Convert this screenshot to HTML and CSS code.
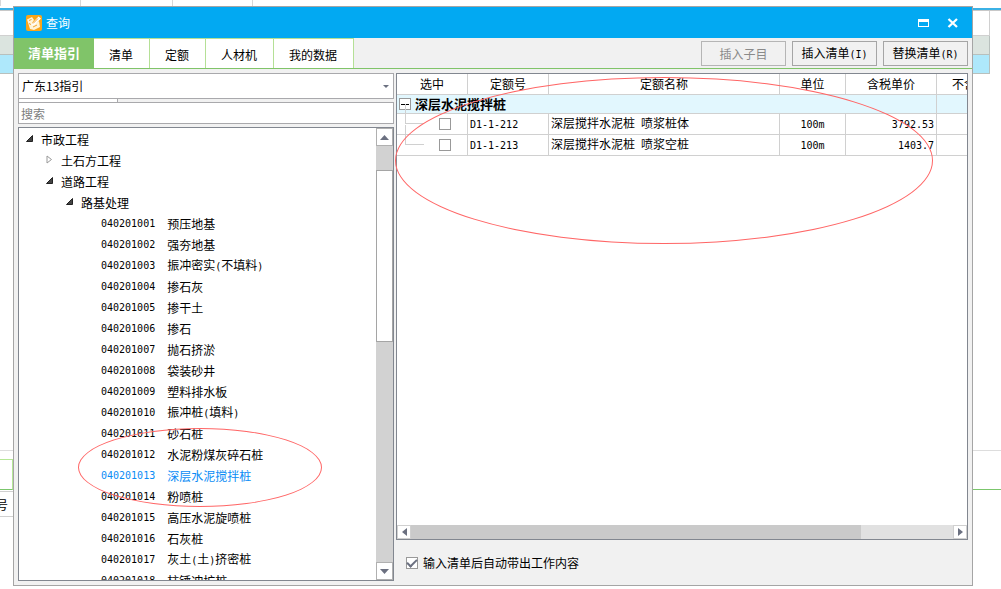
FILE: index.html
```html
<!DOCTYPE html>
<html lang="zh-CN">
<head>
<meta charset="utf-8">
<meta name="viewport" content="width=device-width, initial-scale=1">
<title>查询</title>
<link rel="stylesheet" href="styles.css">
</head>
<body>
<div class="backdrop" aria-hidden="true">
  <div class="ruler"><i></i><i></i><i></i></div>
  <div class="edge edge-left">
    <div class="blue-line"></div>
    <div class="strip white"></div>
    <div class="strip sage"></div>
    <div class="strip sky"></div>
    <div class="lower">
      <div class="green-box"></div>
      <div class="label-cell">号</div>
    </div>
  </div>
  <div class="edge edge-right">
    <div class="blue-line"></div>
    <div class="strip white"></div>
    <div class="strip sage"></div>
    <div class="strip sky"></div>
    <div class="lower"><div class="green-line"></div></div>
  </div>
</div>

<main class="window">
  <header class="titlebar">
    <svg class="app-icon" viewBox="0 0 16 16" width="16" height="16">
      <rect width="16" height="16" rx="2" fill="#f9a51a"/>
      <path d="M1 4.5 6 2l2 3-2 3 2 1 5-3 1 6-6 3-4-1z" fill="#fff4d8"/>
      <path d="M6 8.500 12.500 1.500 15 3.500 8.500 10 5.500 10.500z" fill="#fff"/>
      <path d="M3 5.500 5.500 4.500M3.500 8l1 2M7 12l4-2M7 8.500l5-5" stroke="#f4a332" fill="none"/>
    </svg>
    <h1 class="title">查询</h1>
    <button class="win-button" aria-label="最大化"><svg width="12" height="10" viewBox="0 0 12 10"><path d="M0 1h11v8H0zM1 4v4h9V4z" fill="#fff" fill-rule="evenodd"/></svg></button>
    <button class="win-button" aria-label="关闭"><svg width="12" height="10" viewBox="0 0 12 10"><path d="M1.500 1 10 9M10 1 1.500 9" stroke="#fff" stroke-width="2.300"/></svg></button>
  </header>

  <div class="toolbar">
    <nav class="tabs">
      <button class="tab active">清单指引</button><button class="tab">清单</button><button class="tab">定额</button><button class="tab">人材机</button><button class="tab">我的数据</button>
    </nav>
    <div class="actions">
      <button class="action" disabled>插入子目</button>
      <button class="action">插入清单<span class="mono">(I)</span></button>
      <button class="action">替换清单<span class="mono">(R)</span></button>
    </div>
  </div>

  <div class="content">
    <section class="sidebar">
      <div class="combo">
        <select class="combo-select" aria-label="指引"><option>广东13指引</option></select>
        <svg class="combo-arrow" width="6" height="3" viewBox="0 0 6 3"><path d="M0 0h6L3 3z" fill="#6b7080"/></svg>
      </div>
      <div class="splitter"></div>
      <input class="search" type="text" placeholder="搜索" aria-label="搜索">
      <div class="tree-panel">
        <ul class="tree">
          <li class="level-1"><svg class="twisty" viewBox="0 0 7 7"><path d="M6.500.5v6h-6z" fill="#444" stroke="#222"/></svg>市政工程</li>
          <li class="level-2"><svg class="twisty" viewBox="0 0 7 9"><path d="M1 1v7l4.500-3.500z" fill="#fff" stroke="#999"/></svg>土石方工程</li>
          <li class="level-2"><svg class="twisty" viewBox="0 0 7 7"><path d="M6.500.5v6h-6z" fill="#444" stroke="#222"/></svg>道路工程</li>
          <li class="level-3"><svg class="twisty" viewBox="0 0 7 7"><path d="M6.500.5v6h-6z" fill="#444" stroke="#222"/></svg>路基处理</li>
          <li class="leaf"><span class="mono">040201001</span><span>预压地基</span></li>
          <li class="leaf"><span class="mono">040201002</span><span>强夯地基</span></li>
          <li class="leaf"><span class="mono">040201003</span><span>振冲密实<span class="mono">(</span>不填料<span class="mono">)</span></span></li>
          <li class="leaf"><span class="mono">040201004</span><span>掺石灰</span></li>
          <li class="leaf"><span class="mono">040201005</span><span>掺干土</span></li>
          <li class="leaf"><span class="mono">040201006</span><span>掺石</span></li>
          <li class="leaf"><span class="mono">040201007</span><span>抛石挤淤</span></li>
          <li class="leaf"><span class="mono">040201008</span><span>袋装砂井</span></li>
          <li class="leaf"><span class="mono">040201009</span><span>塑料排水板</span></li>
          <li class="leaf"><span class="mono">040201010</span><span>振冲桩<span class="mono">(</span>填料<span class="mono">)</span></span></li>
          <li class="leaf"><span class="mono">040201011</span><span>砂石桩</span></li>
          <li class="leaf"><span class="mono">040201012</span><span>水泥粉煤灰碎石桩</span></li>
          <li class="leaf selected"><span class="mono">040201013</span><span>深层水泥搅拌桩</span></li>
          <li class="leaf"><span class="mono">040201014</span><span>粉喷桩</span></li>
          <li class="leaf"><span class="mono">040201015</span><span>高压水泥旋喷桩</span></li>
          <li class="leaf"><span class="mono">040201016</span><span>石灰桩</span></li>
          <li class="leaf"><span class="mono">040201017</span><span>灰土<span class="mono">(</span>土<span class="mono">)</span>挤密桩</span></li>
          <li class="leaf"><span class="mono">040201018</span><span>柱锤冲扩桩</span></li>
        </ul>
        <div class="vscroll">
          <button class="scroll-button" aria-label="向上"><svg width="9" height="5" viewBox="0 0 9 5"><path d="M0 5h9L4.500 0z" fill="#6b7080"/></svg></button>
          <div class="vtrack"><div class="vthumb"></div></div>
          <button class="scroll-button" aria-label="向下"><svg width="9" height="5" viewBox="0 0 9 5"><path d="M0 0h9L4.500 5z" fill="#6b7080"/></svg></button>
        </div>
      </div>
    </section>

    <section class="detail">
      <div class="grid-panel">
        <div class="grid-view">
          <table class="grid">
            <colgroup><col class="c-pick"><col class="c-code"><col class="c-name"><col class="c-unit"><col class="c-price"><col class="c-price"></colgroup>
            <thead>
              <tr><th>选中</th><th>定额号</th><th>定额名称</th><th>单位</th><th>含税单价</th><th>不含税单价</th></tr>
            </thead>
            <tbody>
              <tr class="group"><td colspan="5"><div class="group-label"><button class="collapse" aria-label="折叠"></button>深层水泥搅拌桩</div></td><td></td></tr>
              <tr><td class="pick"><input class="check" type="checkbox" aria-label="D1-1-212"></td><td><span class="mono">D1-1-212</span></td><td>深层搅拌水泥桩<span class="mono"> </span>喷浆桩体</td><td class="center"><span class="mono">100m</span></td><td class="number"><span class="mono">3792.53</span></td><td></td></tr>
              <tr><td class="pick"><input class="check" type="checkbox" aria-label="D1-1-213"></td><td><span class="mono">D1-1-213</span></td><td>深层搅拌水泥桩<span class="mono"> </span>喷浆空桩</td><td class="center"><span class="mono">100m</span></td><td class="number"><span class="mono">1403.7</span></td><td></td></tr>
            </tbody>
          </table>
        </div>
        <div class="hscroll">
          <button class="scroll-button" aria-label="向左"><svg width="5" height="8" viewBox="0 0 5 8"><path d="M5 0v8L0 4z" fill="#6b7080"/></svg></button>
          <div class="htrack"><div class="hthumb"></div></div>
          <button class="scroll-button" aria-label="向右"><svg width="5" height="8" viewBox="0 0 5 8"><path d="M0 0v8l5-4z" fill="#6b7080"/></svg></button>
        </div>
      </div>
      <label class="option"><input class="check" type="checkbox" checked>输入清单后自动带出工作内容</label>
    </section>
  </div>

  <div class="mark mark-grid"></div>
  <div class="mark mark-tree"></div>
</main>
</body>
</html>
```
FILE: styles.css
```css
* { box-sizing: border-box; }

body {
  display: flex;
  height: 100vh;
  margin: 0;
  padding: 6px 28px 3px 13px;
  overflow: hidden;
  background: #fff;
  color: #000;
  font: 12px/18px "Noto Sans CJK SC", sans-serif;
}

button, input, select {
  margin: 0;
  padding: 0;
  border: 0;
  border-radius: 0;
  background: none;
  color: inherit;
  font: inherit;
}

.mono {
  font-family: "DejaVu Sans Mono", monospace;
  font-size: 10px;
  white-space: pre;
}

/* Application behind the dialog */
.backdrop {
  position: absolute;
  inset: 0;
  z-index: -1;
  display: flex;
  justify-content: space-between;
  overflow: hidden;
}

.ruler {
  position: absolute;
  inset: 0 0 auto;
  display: flex;
  height: 6px;
  border-left: 1px solid #d8d8d8;
}
.ruler i { width: 80px; border-right: 1px solid #d8d8d8; }
.ruler i:nth-child(2) { width: 92px; }

.edge { display: flex; flex-direction: column; padding-top: 8px; }
.edge-left { width: 13px; }
.edge-right { width: 28px; }
.blue-line { height: 3px; border-bottom: 1px solid #c8c8c8; background: #3bb1e5; }
.strip { height: 19px; border-bottom: 1px solid #b8c0bd; }
.edge-right .strip { width: 17px; border-right: 1px solid #b8c0bd; }
.strip.white { height: 25px; border-color: #d0d0d0; }
.sage { background: #dbe4df; }
.sky { background: #aee8fb; }
.lower {
  display: flex;
  flex-direction: column;
  height: 139px;
  margin-top: auto;
  padding-top: 8px;
  border-top: 1px solid #ddd;
}
.green-box {
  height: 31px;
  margin-bottom: 1px;
  border: solid #b5e796;
  border-width: 1px 1px 1px 0;
  border-bottom-color: #7bc66c;
}
.label-cell {
  display: flex;
  justify-content: flex-end;
  height: 26px;
  padding-right: 5px;
  border: solid #d0d0d0;
  border-width: 1px 0;
  line-height: 26px;
}
.green-line { height: 31px; border-bottom: 1px solid #7bc66c; }

/* Dialog */
.window {
  position: relative;
  display: flex;
  flex: 1;
  flex-direction: column;
  min-width: 0;
  border: 1px solid #a5a5a5;
  background: #f1f1f1;
}

.titlebar {
  display: flex;
  align-items: center;
  height: 31px;
  padding: 0 12px;
  background: #02a9f2;
  color: #fff;
}
.title { flex: 1; margin: 0 0 0 4px; font-size: 12px; font-weight: 400; }
.win-button { display: flex; width: 14px; margin-left: 15px; justify-content: center; }

.toolbar {
  display: flex;
  justify-content: space-between;
  height: 31px;
  border-bottom: 1px solid #80c469;
}
.tabs { display: flex; }
.tab {
  padding: 2px 16px 0 15px;
  border: solid #b5e096;
  border-width: 1px 1px 0 0;
  background: #fff;
}
.tab.active {
  padding: 0 14px;
  border: 0;
  background: #80c469;
  color: #fff;
  font-size: 13px;
  font-weight: 700;
}
.actions { display: flex; gap: 6px; padding: 3px 4px 2px 0; }
.action { width: 85px; border: 1px solid #a5a5a5; }
.action:disabled { border-color: #b5b5b5; color: #8a8a8a; }

.content {
  display: flex;
  flex: 1;
  gap: 2px;
  min-height: 0;
  padding: 4px;
}

.sidebar { display: flex; flex-direction: column; width: 376px; }
.combo { position: relative; }
.combo-select {
  display: block;
  width: 100%;
  height: 26px;
  padding-left: 3px;
  border: 1px solid #a9a9ac;
  appearance: none;
  background: #fff;
}
.combo-arrow { position: absolute; top: 12px; right: 5px; }
.splitter {
  width: 100px;
  height: 3px;
  border: solid #a9a9ac;
  border-width: 0 1px;
  background: #fff;
}
.search { height: 22px; padding-left: 2px; border: 1px solid #a9a9ac; background: #fff; }
.search::placeholder { color: #7d7d7d; opacity: 1; }

.tree-panel {
  display: flex;
  flex: 1;
  min-height: 0;
  margin-top: 3px;
  border: 1px solid #828790;
  background: #fff;
}
.tree {
  flex: 1;
  margin: 0;
  padding: 1px 0 0;
  overflow: hidden;
  list-style: none;
}
.tree li { display: flex; align-items: center; height: 21px; }
.twisty { width: 7px; height: 9px; margin: 0 8px 2px 0; }
.level-1 { padding-left: 7px; }
.level-2 { padding-left: 27px; }
.level-3 { padding-left: 47px; }
.leaf { gap: 12px; padding-left: 82px; }
.selected { color: #0a8cf5; }

.scroll-button {
  display: flex;
  align-items: center;
  justify-content: center;
  border: 1px solid #b0b0b0;
  background: #fff;
}
.vscroll { display: flex; flex-direction: column; width: 17px; background: #d2d2d2; }
.vscroll .scroll-button { height: 18px; }
.vtrack { flex: 1; padding-top: 24px; }
.vthumb { height: 44%; border: 1px solid #a5a5a5; background: #fff; }

.detail { display: flex; flex: 1; flex-direction: column; min-width: 0; }
.grid-panel {
  display: flex;
  flex: 1;
  flex-direction: column;
  border: 1px solid #828790;
  background: #fff;
}
.grid-view { flex: 1; overflow: hidden; }
.grid { width: 631px; border-collapse: separate; border-spacing: 0; table-layout: fixed; }
.c-pick { width: 71px; }
.c-code { width: 81px; }
.c-name { width: 231px; }
.c-unit { width: 66px; }
.c-price { width: 91px; }
.grid th, .grid td {
  height: 19px;
  padding: 0 2px;
  border: solid #d0d0d0;
  border-width: 0 1px 1px 0;
  font-weight: 400;
  line-height: 18px;
  text-align: left;
}
.grid th { height: 21px; line-height: 20px; text-align: center; }
.group td { background: #e2f7fe; }
.group-label { display: flex; align-items: center; gap: 4px; font-size: 13px; font-weight: 700; }
.collapse {
  display: grid;
  place-items: center;
  width: 12px;
  height: 12px;
  border: 1px solid #999;
  background: #fff;
}
.collapse::before { width: 8px; height: 1px; background: #000; content: ""; }
.grid .pick { position: relative; padding-left: 42px; }
.pick::before {
  position: absolute;
  top: -10px;
  left: 8px;
  width: 18px;
  height: 19px;
  border: solid #d0d0d0;
  border-width: 0 0 1px 1px;
  content: "";
}
.grid .center { text-align: center; }
.grid .number { text-align: right; }

.check {
  display: grid;
  place-items: center;
  width: 12px;
  height: 12px;
  border: 1px solid #999;
  appearance: none;
  background: #fff;
}
.check:checked::before {
  width: 8px;
  height: 4px;
  margin-bottom: 3px;
  border: solid #6b7080;
  border-width: 0 0 2px 2px;
  transform: rotate(-45deg);
  content: "";
}

.hscroll { display: flex; height: 14px; background: #e1e1e1; }
.hscroll .scroll-button { width: 14px; border-color: #d0d0d0; }
.htrack { flex: 1; }
.hthumb { width: 83%; height: 100%; background: #cacaca; }

.option {
  display: flex;
  align-items: center;
  gap: 5px;
  height: 41px;
  padding: 5px 0 0 10px;
}

/* Hand-drawn review rings */
.mark {
  position: absolute;
  border: 1px solid #f66;
  border-radius: 50%;
  pointer-events: none;
}
.mark-grid { top: 70px; left: 381px; width: 538px; height: 167px; }
.mark-tree { top: 421px; left: 64px; width: 244px; height: 79px; }
```
